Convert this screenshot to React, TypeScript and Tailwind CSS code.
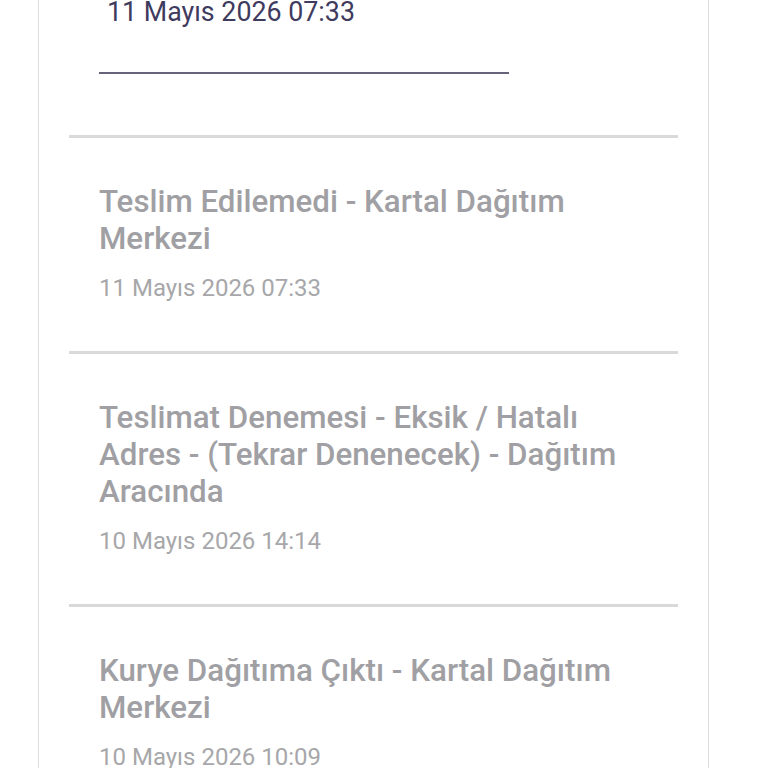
import React from "react";

type Event = { title: string; date: string };

const events: Event[] = [
  { title: "Teslim Edilemedi - Kartal Dağıtım Merkezi", date: "11 Mayıs 2026 07:33" },
  {
    title: "Teslimat Denemesi - Eksik / Hatalı Adres - (Tekrar Denenecek) - Dağıtım Aracında",
    date: "10 Mayıs 2026 14:14",
  },
  { title: "Kurye Dağıtıma Çıktı - Kartal Dağıtım Merkezi", date: "10 Mayıs 2026 10:09" },
];

export default function App() {
  return (
    <div className="h-[768px] overflow-hidden bg-white" style={{ fontFamily: "Roboto, 'Noto Sans', sans-serif" }}>
      <div className="ml-[38px] w-[671px] min-h-[800px] border-x border-[#dcdcdc] px-[30px] -mt-[4px]">
        {/* current status header */}
        <div className="px-[30px]">
          <div className="pl-[8px] text-[26.8px] leading-[32px] text-[#3f3b5e]">11 Mayıs 2026 07:33</div>
          <div className="mt-[44px] h-[2px] w-[410px] bg-[#66637a]" />
        </div>
        <div className="mt-[61px]">
          {events.map((e, i) => (
            <div key={i} className="border-t-[3px] border-[#d9d9d9] px-[30px] pt-[45px] pb-[47px]">
              <div className="text-[31.3px] leading-[37px] font-medium text-[#a0a0a4]">{e.title}</div>
              <div className="mt-[15px] text-[24px] leading-[32px] text-[#a7a7aa]">{e.date}</div>
            </div>
          ))}
        </div>
      </div>
    </div>
  );
}
